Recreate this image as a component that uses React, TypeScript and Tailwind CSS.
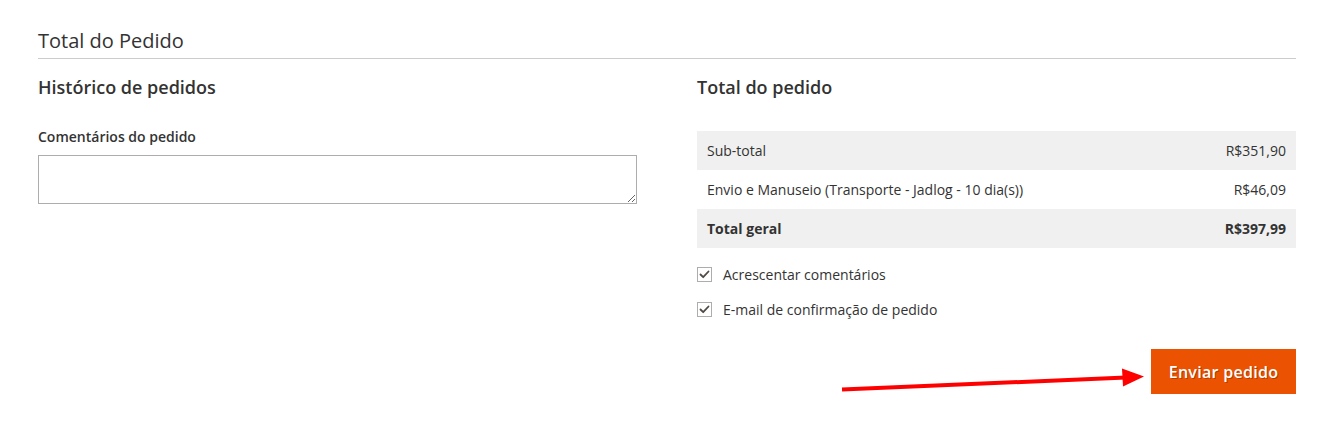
import type { ReactNode } from 'react';

const rows = [
  { label: 'Sub-total', value: 'R$351,90', shaded: true, bold: false },
  { label: 'Envio e Manuseio (Transporte - Jadlog - 10 dia(s))', value: 'R$46,09', shaded: false, bold: false },
  { label: 'Total geral', value: 'R$397,99', shaded: true, bold: true },
];

function Check({ children }: { children: ReactNode }) {
  return (
    <label className="flex h-5 items-center">
      <span className="flex h-[15px] w-[15px] items-center justify-center border border-[#adadad] bg-white">
        <svg width="11" height="11" viewBox="0 0 11 11" fill="none">
          <path d="M1.5 5.5 L4.2 8.2 L9.5 2.5" stroke="#514943" strokeWidth="1.8" strokeLinecap="round" strokeLinejoin="round" />
        </svg>
      </span>
      <span className="ml-[11px] text-[14px] text-[#333]">{children}</span>
    </label>
  );
}

export default function App() {
  return (
    <div
      className="relative h-[442px] w-full bg-white pl-[38px] text-[#333]"
      style={{ fontFamily: '"Open Sans", "Liberation Sans", sans-serif' }}
    >
      <div className="w-[1258px] pt-[27px]">
        <div className="border-b border-[#cccccc] pb-[3px]">
          <h1 className="text-[20px] leading-[28px] font-normal">Total do Pedido</h1>
        </div>

        <div className="mt-4 flex gap-[60px]">
          <section className="w-[599px]">
            <h2 className="text-[18px] leading-6 font-semibold">Histórico de pedidos</h2>
            <p className="mt-7 text-[14px] leading-5 font-semibold">Comentários do pedido</p>
            <textarea className="mt-2 block h-[49px] w-[599px] border border-[#adadad] bg-white" />
          </section>

          <section className="w-[599px]">
            <h2 className="text-[18px] leading-6 font-semibold">Total do pedido</h2>
            <div className="mt-8">
              {rows.map((r) => (
                <div
                  key={r.label}
                  className={`flex h-[39px] items-center justify-between px-[10px] text-[14px] ${
                    r.shaded ? 'bg-[#f0f0f0]' : 'bg-white'
                  } ${r.bold ? 'font-bold' : ''}`}
                >
                  <span>{r.label}</span>
                  <span>{r.value}</span>
                </div>
              ))}
            </div>

            <div className="mt-4 flex flex-col gap-[15px]">
              <Check>Acrescentar comentários</Check>
              <Check>E-mail de confirmação de pedido</Check>
            </div>

            <div className="mt-[30px] flex justify-end">
              <button className="h-[45px] w-[145px] bg-[#eb5202] text-[16px] font-semibold tracking-[0.3px] text-white [text-shadow:1px_1px_0_rgba(0,0,0,0.25)]">
                Enviar pedido
              </button>
            </div>
          </section>
        </div>
      </div>

      <svg className="pointer-events-none absolute inset-0" width="1322" height="442">
        <line x1="842" y1="389.5" x2="1126" y2="377.5" stroke="#ff0000" strokeWidth="4" />
        <polygon points="1122,368.5 1144,376.5 1123,386.5" fill="#ff0000" />
      </svg>
    </div>
  );
}
